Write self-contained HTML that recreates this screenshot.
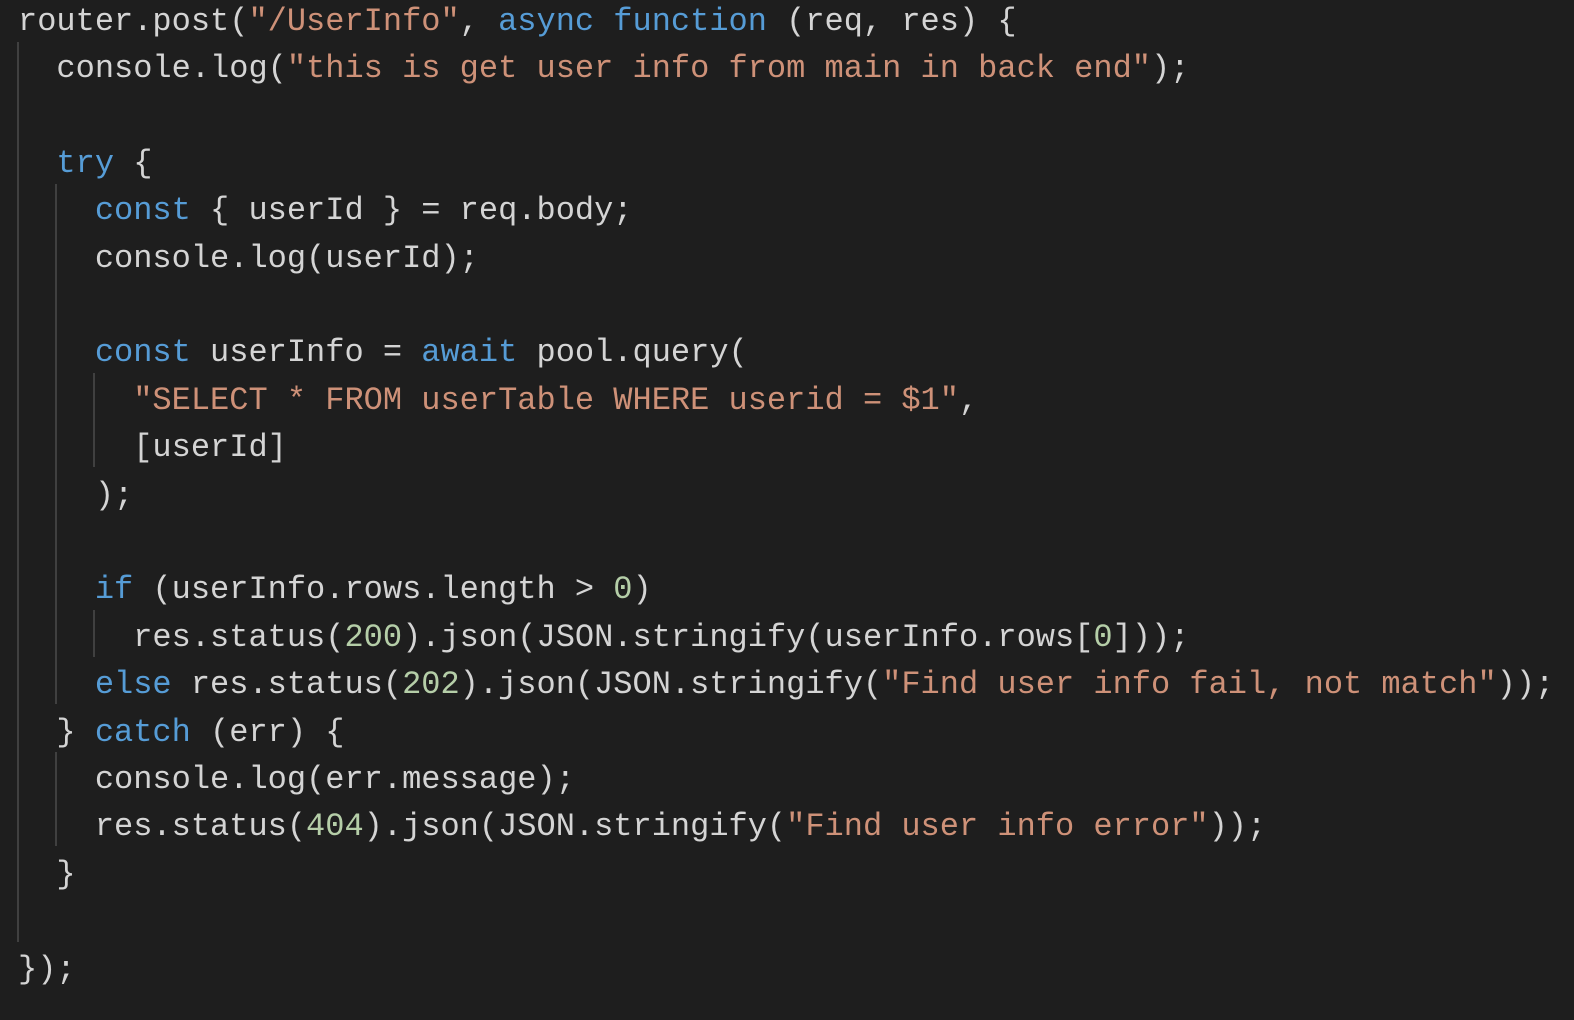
<!DOCTYPE html>
<html><head><meta charset="utf-8"><style>
html,body{margin:0;padding:0;background:#1e1e1e;width:1574px;height:1020px;overflow:hidden}
pre{position:absolute;left:18px;top:-2.5px;margin:0;font-family:"Liberation Mono",monospace;font-size:32px;line-height:47.4px;color:#d4d4d4;white-space:pre}
.k{color:#569cd6}.s{color:#ce9178}.n{color:#b5cea8}
.g{position:absolute;width:2px;background:#404040}
</style></head><body>
<div class="g" style="left:17px;top:42px;height:900px"></div>
<div class="g" style="left:55px;top:184px;height:520px"></div>
<div class="g" style="left:55px;top:752px;height:94px"></div>
<div class="g" style="left:93px;top:373px;height:94px"></div>
<div class="g" style="left:93px;top:610px;height:47px"></div>
<pre>router.post(<span class="s">"/UserInfo"</span>, <span class="k">async</span> <span class="k">function</span> (req, res) {
  console.log(<span class="s">"this is get user info from main in back end"</span>);

  <span class="k">try</span> {
    <span class="k">const</span> { userId } = req.body;
    console.log(userId);

    <span class="k">const</span> userInfo = <span class="k">await</span> pool.query(
      <span class="s">"SELECT * FROM userTable WHERE userid = $1"</span>,
      [userId]
    );

    <span class="k">if</span> (userInfo.rows.length &gt; <span class="n">0</span>)
      res.status(<span class="n">200</span>).json(JSON.stringify(userInfo.rows[<span class="n">0</span>]));
    <span class="k">else</span> res.status(<span class="n">202</span>).json(JSON.stringify(<span class="s">"Find user info fail, not match"</span>));
  } <span class="k">catch</span> (err) {
    console.log(err.message);
    res.status(<span class="n">404</span>).json(JSON.stringify(<span class="s">"Find user info error"</span>));
  }

});</pre>
</body></html>
